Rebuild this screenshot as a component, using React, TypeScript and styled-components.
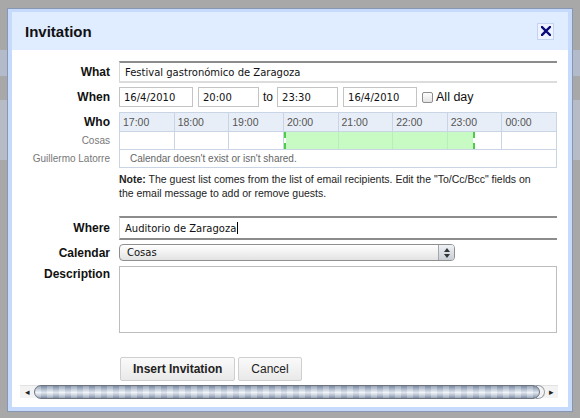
import styled, { createGlobalStyle } from 'styled-components';

const GlobalStyle = createGlobalStyle`
  html, body {
    margin: 0;
    padding: 0;
  }
  body {
    width: 580px;
    height: 418px;
    overflow: hidden;
    font-family: 'Liberation Sans', Arial, sans-serif;
    background: linear-gradient(
      to bottom,
      #a8a8a8 0 50px,
      #b3bbca 50px 76px,
      #a8a8a8 76px 100px,
      #b7bbc5 100px 160px,
      #a8a8a8 160px
    );
  }
`;

const hours = ['17:00', '18:00', '19:00', '20:00', '21:00', '22:00', '23:00', '00:00'];

// 20:00 -> 23:30, en fracción del ancho total de la tabla (8 columnas)
const busyStart = 3 / 8;
const busyEnd = 6.5 / 8;

const App = () => {
  return (
    <>
      <GlobalStyle />
      <Dialog>
        <Header>
          <Title>Invitation</Title>
          <CloseButton>
            <svg width="10" height="10" viewBox="0 0 10 10">
              <path d="M1 1 L9 9 M9 1 L1 9" stroke="#0b0b7a" strokeWidth="2.4" strokeLinecap="square" />
            </svg>
          </CloseButton>
        </Header>
        <Body>
          <Row>
            <Label>What</Label>
            <TextField $h={22}>Festival gastronómico de Zaragoza</TextField>
          </Row>

          <Row $mt={4}>
            <Label>When</Label>
            <WhenLine>
              <SmallField $w={74}>16/4/2010</SmallField>
              <SmallField $w={61}>20:00</SmallField>
              <Plain>to</Plain>
              <SmallField $w={61}>23:30</SmallField>
              <SmallField $w={74}>16/4/2010</SmallField>
              <CheckLabel>
                <CheckBox />
                All day
              </CheckLabel>
            </WhenLine>
          </Row>

          <Row $mt={5} $top>
            <WhoLabels>
              <Label $h={20}>Who</Label>
              <SubLabel>Cosas</SubLabel>
              <SubLabel>Guillermo Latorre</SubLabel>
            </WhoLabels>
            <Schedule>
              {hours.map((h) => (
                <HourCell key={h}>{h}</HourCell>
              ))}
              {hours.map((h) => (
                <SlotCell key={'s' + h} />
              ))}
              <Busy
                style={{
                  left: `${busyStart * 100}%`,
                  width: `${(busyEnd - busyStart) * 100}%`,
                }}
              />
              <MessageCell>Calendar doesn&apos;t exist or isn&apos;t shared.</MessageCell>
            </Schedule>
          </Row>

          <Row $mt={4}>
            <Label />
            <Note>
              <NoteLead>Note:</NoteLead> The guest list comes from the list of email recipients. Edit the
              "To/Cc/Bcc" fields on the email message to add or remove guests.
            </Note>
          </Row>

          <Row $mt={16}>
            <Label>Where</Label>
            <TextField $h={24} $strong>
              Auditorio de Zaragoza
              <Caret />
            </TextField>
          </Row>

          <Row $mt={4}>
            <Label>Calendar</Label>
            <Select>
              <SelectText>Cosas</SelectText>
              <SelectArrows>
                <svg width="6" height="10" viewBox="0 0 6 10">
                  <path d="M0 4 L3 0 L6 4 Z M0 6 L3 10 L6 6 Z" fill="#333" />
                </svg>
              </SelectArrows>
            </Select>
          </Row>

          <Row $mt={5} $top>
            <Label $pt={1}>Description</Label>
            <TextArea />
          </Row>

          <Row $mt={24}>
            <Label />
            <Buttons>
              <Button $primary>Insert Invitation</Button>
              <Button>Cancel</Button>
            </Buttons>
          </Row>

          <ScrollBar>
            <Arrow>◂</Arrow>
            <Thumb>
              <ThumbEnd />
            </Thumb>
            <Arrow>▸</Arrow>
          </ScrollBar>
        </Body>
      </Dialog>
    </>
  );
};

export default App;

const Dialog = styled.div`
  margin: 8px 0 0 7px;
  width: 556px;
  border: 1px solid #8797b3;
  padding: 3px 4px 4px 4px;
  background: #c6dafb;
`;

const Header = styled.div`
  height: 38px;
  background: #e0ecff;
  display: flex;
  align-items: center;
  justify-content: space-between;
  padding: 0 14px 0 13px;
`;

const Title = styled.div`
  font-size: 15px;
  font-weight: bold;
  color: #111;
`;

const CloseButton = styled.div`
  width: 15px;
  height: 15px;
  display: flex;
  align-items: center;
  justify-content: center;
  background: #eef3ff;
  border: 1px solid #c4d4f0;
`;

const Body = styled.div`
  background: #fff;
  height: 357px;
  box-sizing: border-box;
  padding: 11px 11px 0 0;
  display: flex;
  flex-direction: column;
`;

const Row = styled.div<{ $mt?: number; $top?: boolean }>`
  display: flex;
  align-items: ${({ $top }) => ($top ? 'flex-start' : 'center')};
  gap: 9px;
  margin-top: ${({ $mt }) => $mt ?? 0}px;
`;

const Label = styled.div<{ $h?: number; $pt?: number }>`
  width: 98px;
  flex: none;
  text-align: right;
  font-size: 12px;
  font-weight: bold;
  color: #111;
  padding-top: ${({ $pt }) => $pt ?? 0}px;
  ${({ $h }) => ($h ? `height: ${$h}px; line-height: ${$h}px;` : '')}
`;

const WhoLabels = styled.div`
  width: 98px;
  flex: none;
  display: flex;
  flex-direction: column;
`;

const SubLabel = styled.div`
  height: 18px;
  line-height: 18px;
  text-align: right;
  font-size: 10px;
  color: #777;
`;

const TextField = styled.div<{ $h: number; $strong?: boolean }>`
  width: 438px;
  height: ${({ $h }) => $h}px;
  box-sizing: border-box;
  display: flex;
  align-items: center;
  padding-left: 5px;
  font-family: 'DejaVu Sans', Verdana, sans-serif;
  font-size: 10px;
  color: #111;
  background: #fff;
  border: 1px solid #d6d6d6;
  border-right: none;
  border-top: 2px solid #8c8c8c;
  border-bottom: 2px solid ${({ $strong }) => ($strong ? '#8c8c8c' : '#dcdcdc')};
`;

const Caret = styled.span`
  display: inline-block;
  width: 1px;
  height: 12px;
  margin-left: 1px;
  background: #000;
`;

const WhenLine = styled.div`
  display: flex;
  align-items: center;
  gap: 5px;
  height: 20px;
`;

const SmallField = styled.div<{ $w: number }>`
  width: ${({ $w }) => $w}px;
  height: 20px;
  box-sizing: border-box;
  border: 1px solid #c4c4c4;
  padding-left: 4px;
  display: flex;
  align-items: center;
  font-family: 'DejaVu Sans', Verdana, sans-serif;
  font-size: 10px;
  color: #111;
`;

const Plain = styled.span`
  font-size: 12px;
  color: #111;
  margin: 0 -1px;
`;

const CheckLabel = styled.label`
  display: flex;
  align-items: center;
  gap: 3px;
  font-size: 12.5px;
  color: #111;
`;

const CheckBox = styled.span`
  width: 11px;
  height: 11px;
  box-sizing: border-box;
  border: 1px solid #8e8e8e;
  border-radius: 2px;
  background: linear-gradient(#fdfdfd, #e4e4e4);
`;

const Schedule = styled.div`
  position: relative;
  width: 438px;
  box-sizing: border-box;
  display: grid;
  grid-template-columns: repeat(8, 1fr);
  grid-template-rows: 19px 18px 18px;
  border-top: 1px solid #c9d4e4;
  border-left: 1px solid #c9d4e4;
`;

const HourCell = styled.div`
  background: #e8eef7;
  border-right: 1px solid #c9d4e4;
  border-bottom: 1px solid #c9d4e4;
  font-size: 10.5px;
  color: #555;
  padding-left: 3px;
  line-height: 18px;
`;

const SlotCell = styled.div`
  border-right: 1px solid #c9d4e4;
  border-bottom: 1px solid #c9d4e4;
`;

const Busy = styled.div`
  position: absolute;
  top: 19px;
  height: 17px;
  background: rgba(175, 250, 170, 0.7);
  border-left: 2px dashed #4dcc47;
  border-right: 2px dashed #4dcc47;
  box-sizing: border-box;
  background-clip: padding-box;
`;

const MessageCell = styled.div`
  grid-column: 1 / -1;
  border-right: 1px solid #c9d4e4;
  border-bottom: 1px solid #c9d4e4;
  font-size: 10px;
  color: #666;
  padding-left: 10px;
  line-height: 17px;
`;

const Note = styled.div`
  width: 416px;
  margin-right: 22px;
  font-size: 10.5px;
  line-height: 14px;
  color: #222;
`;

const NoteLead = styled.span`
  font-weight: bold;
`;

const Select = styled.div`
  width: 336px;
  height: 17px;
  box-sizing: border-box;
  display: flex;
  align-items: center;
  justify-content: space-between;
  border: 1px solid #8f8f8f;
  border-radius: 4px;
  background: linear-gradient(#ffffff, #f1f1f1 50%, #e2e2e2);
  overflow: hidden;
`;

const SelectText = styled.span`
  font-family: 'DejaVu Sans', Verdana, sans-serif;
  font-size: 10px;
  color: #111;
  padding-left: 7px;
`;

const SelectArrows = styled.div`
  width: 15px;
  height: 100%;
  display: flex;
  align-items: center;
  justify-content: center;
  border-left: 1px solid #a6a6a6;
  background: linear-gradient(#eef1f5, #c9ced6);
`;

const TextArea = styled.div`
  width: 438px;
  height: 67px;
  box-sizing: border-box;
  border: 1px solid #bdbdbd;
`;

const Buttons = styled.div`
  display: flex;
  gap: 3px;
  margin-left: 1px;
`;

const Button = styled.div<{ $primary?: boolean }>`
  height: 24px;
  box-sizing: border-box;
  padding: 0 12px;
  display: flex;
  align-items: center;
  border: 1px solid #cfcfcf;
  border-radius: 2px;
  background: linear-gradient(#fafafa, #e9e9e9);
  font-size: 12px;
  font-weight: ${({ $primary }) => ($primary ? 'bold' : 'normal')};
  color: #222;
`;

const ScrollBar = styled.div`
  margin: 4px 0 0 8px;
  width: 538px;
  height: 13px;
  box-sizing: border-box;
  display: flex;
  align-items: center;
  background: #f3f3f3;
  border-top: 1px solid #e2e2e2;
`;

const Arrow = styled.span`
  width: 14px;
  flex: none;
  text-align: center;
  font-size: 9px;
  color: #222;
`;

const Thumb = styled.div`
  position: relative;
  flex: 1;
  height: 12px;
  border: 1px solid #6d7480;
  border-radius: 7px;
  margin-right: 4px;
  background:
    repeating-linear-gradient(90deg, rgba(255, 255, 255, 0.22) 0 6px, rgba(110, 125, 150, 0.1) 6px 12px),
    linear-gradient(#7e8da3, #c3cedc 35%, #eef2f8 55%, #a9b6c8 85%, #7d8ba0);
`;

const ThumbEnd = styled.span`
  position: absolute;
  right: -6px;
  top: -1px;
  width: 8px;
  height: 12px;
  border: 1px solid #9aa0a8;
  border-left: none;
  border-radius: 0 7px 7px 0;
`;
